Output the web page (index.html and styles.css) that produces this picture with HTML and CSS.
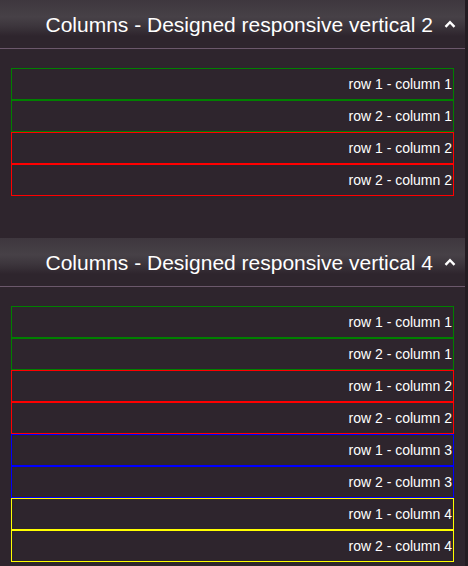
FILE: index.html
```html
<!DOCTYPE html>
<html lang="en">
<head>
    <meta charset="UTF-8">
    <meta name="viewport" content="width=device-width, initial-scale=1.0">
    <title>Columns</title>
    <link rel="stylesheet" href="styles.css">
</head>
<body>
    <div class="page">
        <div class="content">
            <div class="section">
                <div class="section-header">
                    <span class="title">Columns - Designed responsive vertical 2</span>
                    <svg class="chevron" width="12" height="8" viewBox="0 0 12 8"><polyline points="1.5,6.8 6,2.2 10.5,6.8" fill="none" stroke="#fff" stroke-width="2.4"/></svg>
                </div>
                <div class="cells">
                    <div class="cell green">row 1 - column 1</div>
                    <div class="cell green">row 2 - column 1</div>
                    <div class="cell red">row 1 - column 2</div>
                    <div class="cell red">row 2 - column 2</div>
                </div>
            </div>
            <div class="section">
                <div class="section-header">
                    <span class="title">Columns - Designed responsive vertical 4</span>
                    <svg class="chevron" width="12" height="8" viewBox="0 0 12 8"><polyline points="1.5,6.8 6,2.2 10.5,6.8" fill="none" stroke="#fff" stroke-width="2.4"/></svg>
                </div>
                <div class="cells">
                    <div class="cell green">row 1 - column 1</div>
                    <div class="cell green">row 2 - column 1</div>
                    <div class="cell red">row 1 - column 2</div>
                    <div class="cell red">row 2 - column 2</div>
                    <div class="cell blue">row 1 - column 3</div>
                    <div class="cell blue">row 2 - column 3</div>
                    <div class="cell yellow">row 1 - column 4</div>
                    <div class="cell yellow">row 2 - column 4</div>
                </div>
            </div>
        </div>
        <div class="edge"></div>
    </div>
</body>
</html>
```
FILE: styles.css
```css
body {
    margin: 0;
    font-family: "Liberation Sans", Arial, sans-serif;
    background-color: #2e252d;
    color: #fff;
    overflow: hidden;
}
.page {
    display: flex;
    height: 566px;
}
.content {
    flex: 1;
}
.edge {
    width: 3px;
    background-color: #231c22;
}
.section {
    margin-bottom: 42px;
}
.section-header {
    height: 48px;
    display: flex;
    justify-content: flex-end;
    align-items: center;
    padding-right: 9px;
    border-bottom: 1px solid #6b586b;
    background: linear-gradient(#3e373e 0%, #474147 35%, #3c353c 55%, #2e252d 75%);
}
.title {
    font-size: 21px;
    line-height: 48px;
    padding-top: 2px;
}
.chevron {
    margin-left: 11px;
    margin-bottom: 1px;
}
.cells {
    margin: 19px 11px 0;
}
.cell {
    height: 30px;
    line-height: 30px;
    font-size: 14px;
    text-align: right;
    padding-right: 1px;
    border: 1px solid;
}
.green {
    border-color: #008000;
}
.red {
    border-color: #ff0000;
}
.blue {
    border-color: #0000ff;
}
.yellow {
    border-color: #ffff00;
}
```
